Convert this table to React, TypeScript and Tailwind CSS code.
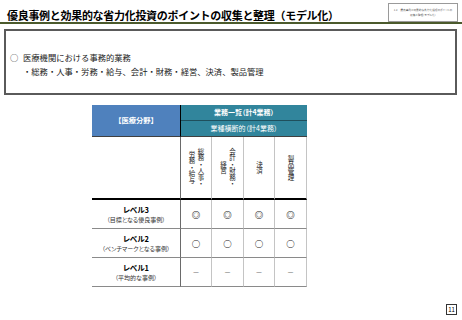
import React from 'react';

const cols = [
  { lines: ['総務・人事・', '労務・給与'] },
  { lines: ['会計・財務・', '経営'] },
  { lines: ['決済'] },
  { lines: ['製品管理'] },
];

const levels = [
  { name: 'レベル3', note: '（目標となる優良事例）', mark: '◎' },
  { name: 'レベル2', note: '（ベンチマークとなる事例）', mark: '○' },
  { name: 'レベル1', note: '（平均的な事例）', mark: '－' },
];

export default function App() {
  return (
    <div className="w-[462px] h-[320px] bg-white flex flex-col text-black font-['Noto_Sans_CJK_JP',sans-serif]">
      {/* Title bar */}
      <header className="h-[24px] flex items-start justify-between border-b-2 border-[#4b5a2c]">
        <h1 className="pl-[7px] pt-[8px] text-[11px] leading-[14px] font-bold tracking-[-0.3px] whitespace-nowrap">
          優良事例と効果的な省力化投資のポイントの収集と整理（モデル化）
        </h1>
        <div className="mt-[3px] mr-[4px] w-[70px] h-[19px] border border-[#9a9a9a] flex flex-col items-center justify-center text-[2.7px] leading-[5px] text-[#555] whitespace-nowrap [font-feature-settings:'palt']">
          <span>1.2　優良事例と効果的な省力化投資のポイントの</span>
          <span>収集と整理（モデル化）</span>
        </div>
      </header>

      {/* Summary box */}
      <div className="mt-[5px] ml-[4px] w-[453px] h-[66px] border-2 border-[#5a5a5a] pl-[4px] pt-[19px] text-[8.3px] leading-[14px] text-[#222]">
        <div className="flex">
          <span className="w-[13px]">○</span>
          <span>医療機関における事務的業務</span>
        </div>
        <div className="pl-[13px]">・総務・人事・労務・給与、会計・財務・経営、決済、製品管理</div>
      </div>

      {/* Table */}
      <div className="ml-[92px] mt-[10px] grid w-[215px] grid-cols-[89px_31px_32px_31px_32px] [font-feature-settings:'palt']">
        <div className="row-span-2 flex items-center justify-center bg-[#4f81bd] border-r border-black border-b border-b-[#404040] text-white font-bold text-[7.3px]">
          【医療分野】
        </div>
        <div className="col-span-4 h-[16px] flex items-center justify-center bg-[#31859c] border-b border-[#1f4f5c] text-white font-bold text-[7px]">
          業務一覧（計4業務）
        </div>
        <div className="col-span-4 h-[16px] flex items-center justify-center bg-[#31859c] border-b border-[#404040] text-white text-[7px]">
          業種横断的（計4業務）
        </div>

        <div className="h-[63px] border-r border-[#6a6a6a] border-b-2 border-b-black" />
        {cols.map((c, i) => (
          <div key={i} className="h-[63px] flex items-center justify-center border-r border-[#c4c4c4] border-b-2 border-b-black">
            <span className="[writing-mode:vertical-rl] [text-orientation:upright] [font-feature-settings:normal] text-center text-[6.5px] leading-[9px] text-[#222]">
              {c.lines.map((l, j) => (
                <React.Fragment key={j}>
                  {j > 0 && <br />}
                  {l}
                </React.Fragment>
              ))}
            </span>
          </div>
        ))}

        {levels.map((lv, i) => (
          <React.Fragment key={i}>
            <div className="h-[29px] flex flex-col items-center justify-center border-r border-[#6a6a6a] border-b border-b-[#8a8a8a]">
              <span className="text-[7.5px] leading-[10px] font-bold">{lv.name}</span>
              <span className="text-[6px] leading-[9px] text-[#333]">{lv.note}</span>
            </div>
            {cols.map((_, j) => (
              <div key={j} className="h-[29px] flex items-center justify-center border-r border-[#c4c4c4] border-b border-b-[#8a8a8a]">
                <span className={lv.mark === '－' ? 'text-[7px] text-[#666]' : 'text-[8.5px] font-black text-[#222]'}>{lv.mark}</span>
              </div>
            ))}
          </React.Fragment>
        ))}
      </div>

      {/* Page number */}
      <div className="mt-auto mb-[5px] mr-[5px] self-end w-[11px] h-[11px] border border-[#333] flex items-center justify-center text-[6px] leading-none">
        11
      </div>
    </div>
  );
}
